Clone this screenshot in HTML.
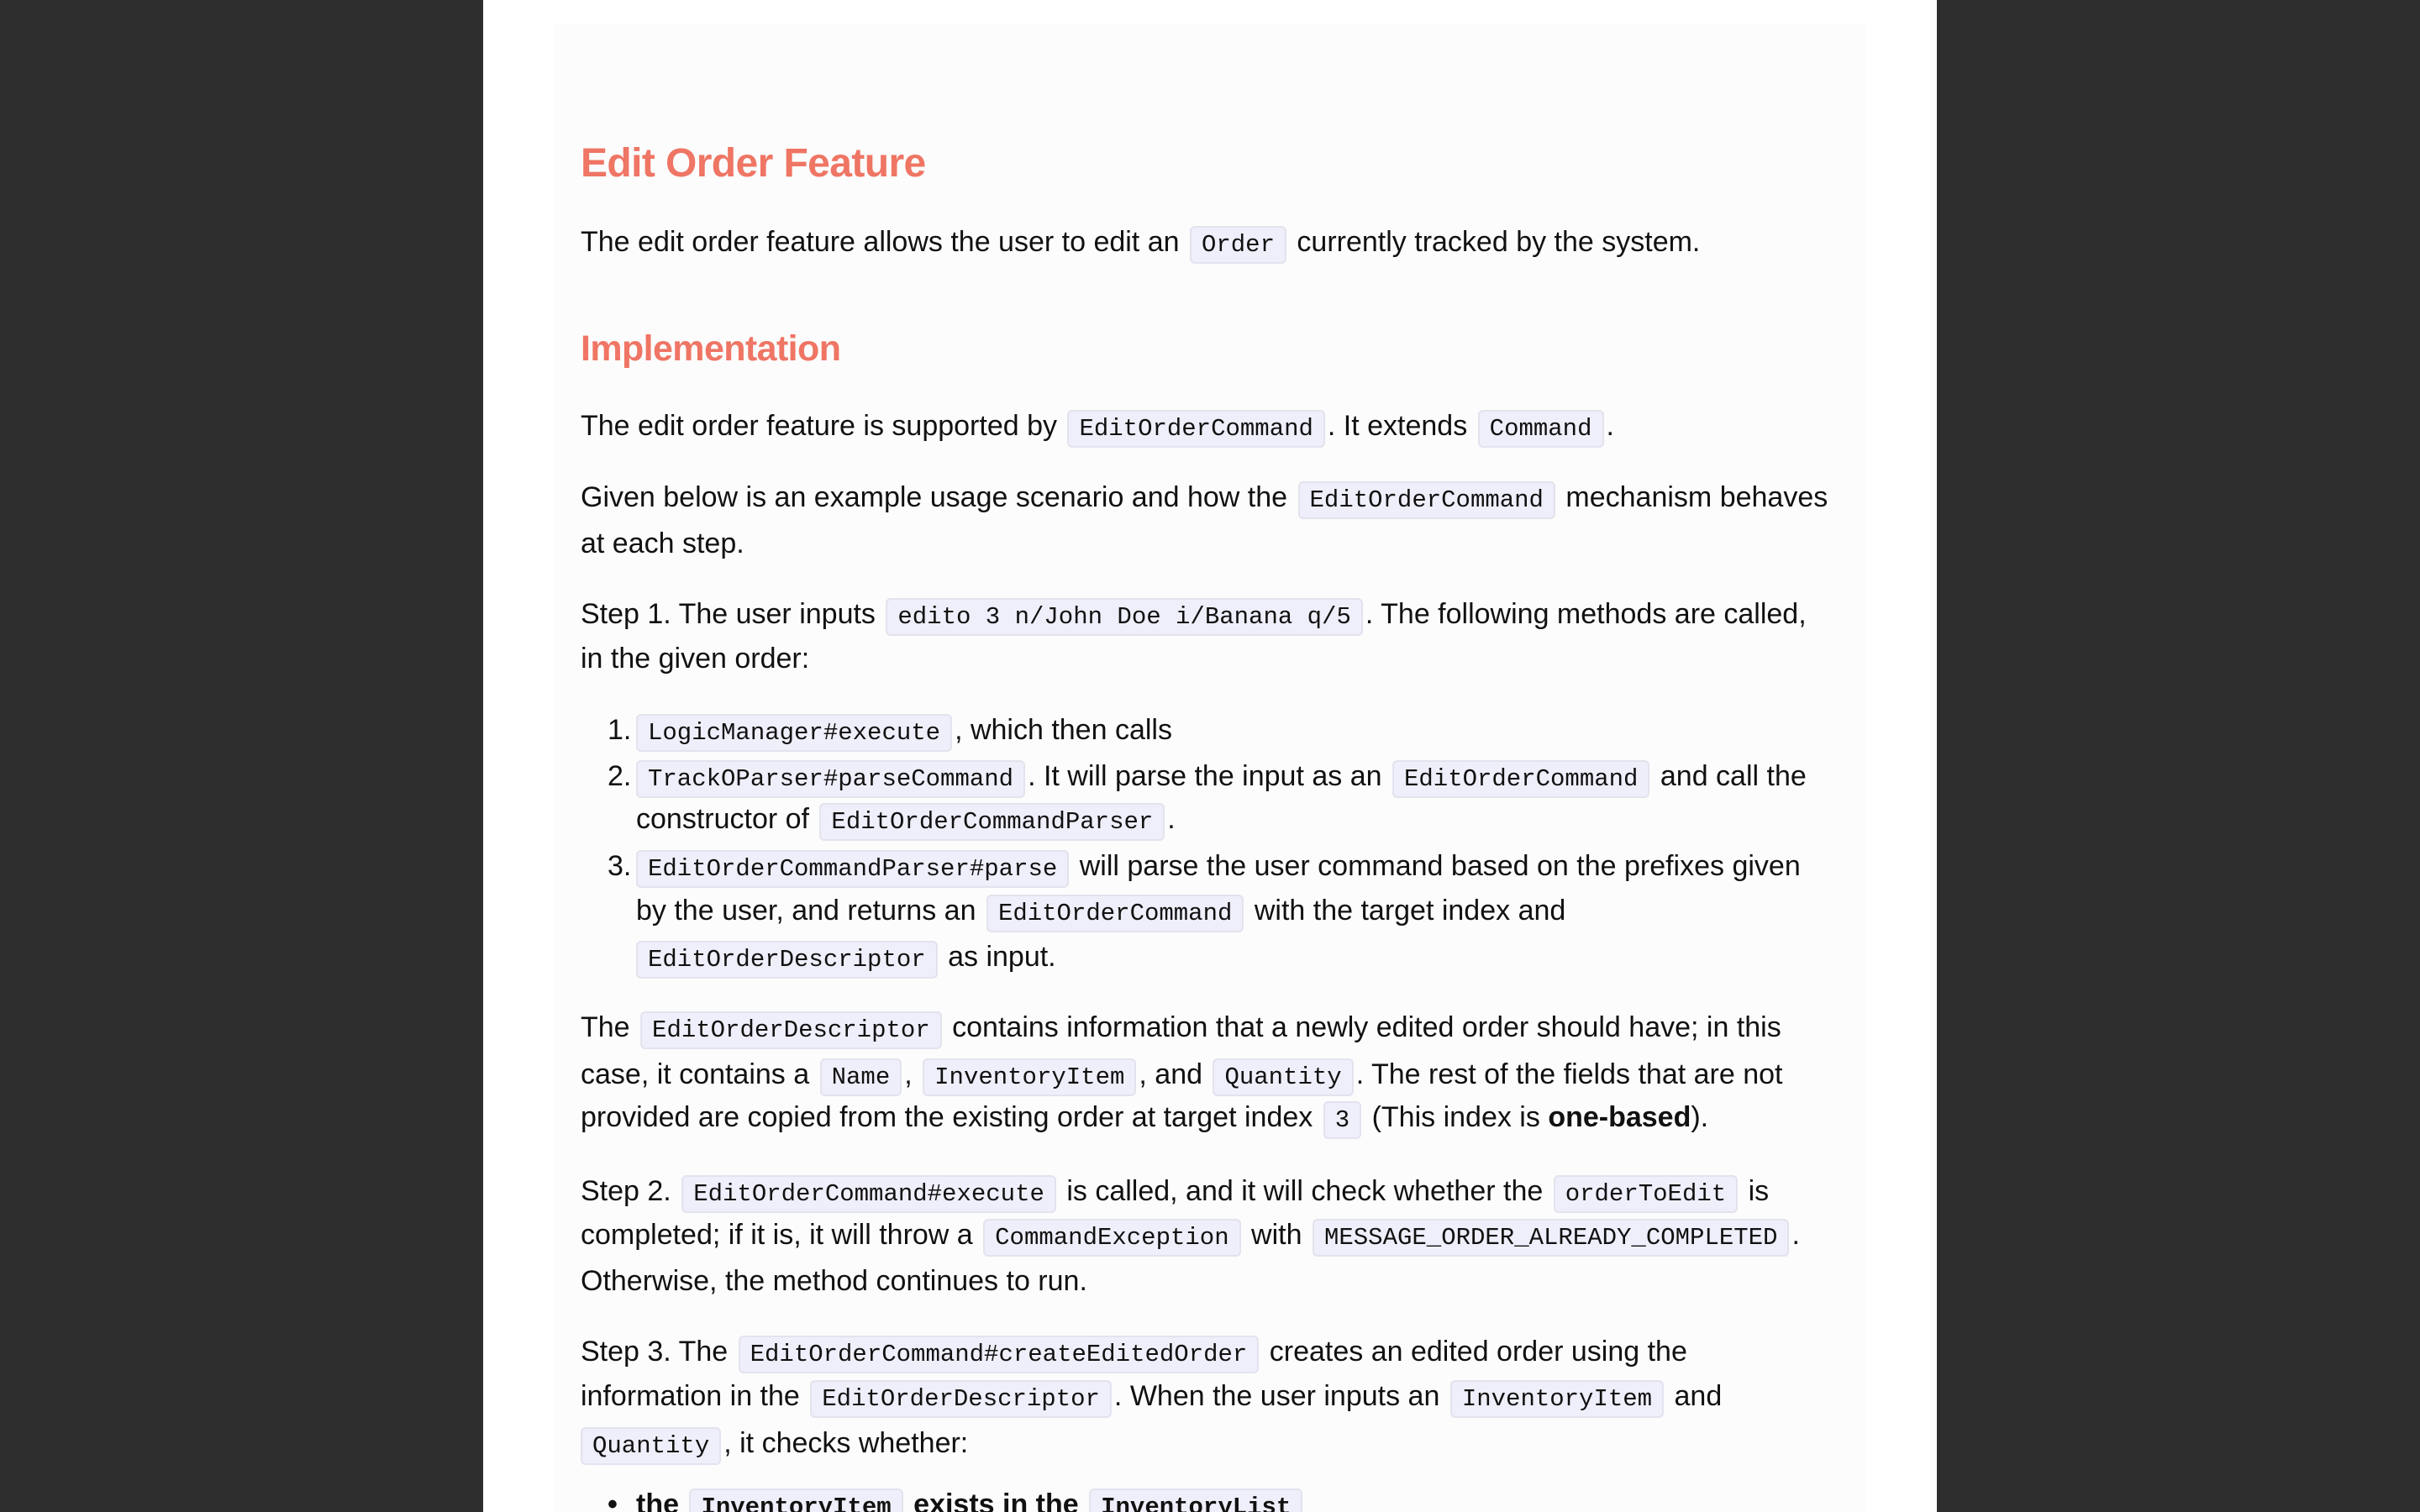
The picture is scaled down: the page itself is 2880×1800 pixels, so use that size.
<!DOCTYPE html>
<html><head><meta charset="utf-8"><style>
html,body{margin:0;padding:0;width:2880px;height:1800px;overflow:hidden}
body{background:#2e2e2e;position:relative;font-family:"Liberation Sans",sans-serif;color:#111}
.page{position:absolute;left:575px;top:0;width:1730px;height:1800px;background:#fff}
.inner{position:absolute;left:658px;top:28px;width:1563px;height:1772px;background:#fcfcfc}
.l{position:absolute;left:691px;white-space:nowrap;font-size:34px;line-height:54px;height:54px;letter-spacing:0}
.h{position:absolute;left:691px;white-space:nowrap;color:#ef7564;font-weight:bold;letter-spacing:-0.6px}
code{font-family:"Liberation Mono",monospace;font-size:29px;letter-spacing:0;background:#efeffb;border:2px solid #e3e3ee;border-radius:6px;padding:4px 12px;margin:0 3px}
.n{position:absolute;left:-34px}
</style></head><body>
<div class="page"></div><div class="inner"></div>
<div class="h" style="top:165px;font-size:48px;line-height:60px">Edit Order Feature</div>
<div class="l" style="top:261px">The edit order feature allows the user to edit an <code>Order</code> currently tracked by the system.</div>
<div class="h" style="top:388px;font-size:43px;line-height:54px">Implementation</div>
<div class="l" style="top:480px">The edit order feature is supported by <code>EditOrderCommand</code>. It extends <code>Command</code>.</div>
<div class="l" style="top:565px">Given below is an example usage scenario and how the <code>EditOrderCommand</code> mechanism behaves</div>
<div class="l" style="top:620px">at each step.</div>
<div class="l" style="top:704px">Step 1. The user inputs <code>edito 3 n/John Doe i/Banana q/5</code>. The following methods are called,</div>
<div class="l" style="top:757px">in the given order:</div>
<div class="l" style="top:842px;left:757px"><span class="n">1.</span><code style="margin-left:0">LogicManager#execute</code>, which then calls</div>
<div class="l" style="top:897px;left:757px"><span class="n">2.</span><code style="margin-left:0">TrackOParser#parseCommand</code>. It will parse the input as an <code>EditOrderCommand</code> and call the</div>
<div class="l" style="top:948px;left:757px">constructor of <code>EditOrderCommandParser</code>.</div>
<div class="l" style="top:1004px;left:757px"><span class="n">3.</span><code style="margin-left:0">EditOrderCommandParser#parse</code> will parse the user command based on the prefixes given</div>
<div class="l" style="top:1057px;left:757px">by the user, and returns an <code>EditOrderCommand</code> with the target index and</div>
<div class="l" style="top:1112px;left:757px"><code style="margin-left:0">EditOrderDescriptor</code> as input.</div>
<div class="l" style="top:1196px">The <code>EditOrderDescriptor</code> contains information that a newly edited order should have; in this</div>
<div class="l" style="top:1252px">case, it contains a <code>Name</code>, <code>InventoryItem</code>, and <code>Quantity</code>. The rest of the fields that are not</div>
<div class="l" style="top:1303px">provided are copied from the existing order at target index <code>3</code> (This index is <b>one-based</b>).</div>
<div class="l" style="top:1391px">Step 2. <code>EditOrderCommand#execute</code> is called, and it will check whether the <code>orderToEdit</code> is</div>
<div class="l" style="top:1443px">completed; if it is, it will throw a <code>CommandException</code> with <code>MESSAGE_ORDER_ALREADY_COMPLETED</code>.</div>
<div class="l" style="top:1498px">Otherwise, the method continues to run.</div>
<div class="l" style="top:1582px">Step 3. The <code>EditOrderCommand#createEditedOrder</code> creates an edited order using the</div>
<div class="l" style="top:1635px">information in the <code>EditOrderDescriptor</code>. When the user inputs an <code>InventoryItem</code> and</div>
<div class="l" style="top:1691px"><code style="margin-left:0">Quantity</code>, it checks whether:</div>
<div class="l" style="top:1764px;left:757px;font-weight:bold"><span class="n">•</span>the <code>InventoryItem</code> exists in the <code>InventoryList</code></div>
</body></html>
